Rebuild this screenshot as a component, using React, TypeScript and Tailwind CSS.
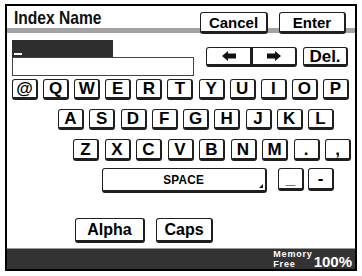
import React from "react";

function Key({
  children,
  className = "w-[26px] h-[21px] text-[17px]",
}: {
  children?: React.ReactNode;
  className?: string;
}) {
  return (
    <div
      className={`${className} flex shrink-0 items-center justify-center rounded-[3px] border border-[#1f1f1f] border-b-[3px] border-r-[2px] bg-white font-bold leading-none text-black`}
    >
      {children}
    </div>
  );
}

function Arrow({ dir }: { dir: "l" | "r" }) {
  return (
    <svg width="14" height="10" viewBox="0 0 14 10">
      {dir === "l" ? (
        <polygon points="0,5 6,0 6,2.5 14,2.5 14,7.5 6,7.5 6,10" fill="#111" />
      ) : (
        <polygon points="14,5 8,0 8,2.5 0,2.5 0,7.5 8,7.5 8,10" fill="#111" />
      )}
    </svg>
  );
}

export default function App() {
  const row1 = ["@", "Q", "W", "E", "R", "T", "Y", "U", "I", "O", "P"];
  const row2 = ["A", "S", "D", "F", "G", "H", "J", "K", "L"];
  const row3 = ["Z", "X", "C", "V", "B", "N", "M", ".", ","];
  return (
    <div className="w-[362px] h-[276px] bg-white pt-[4px] pl-[5px] font-['Liberation_Sans',Arial,sans-serif]">
      <div className="w-[352px] h-[267px] border-2 border-black flex flex-col overflow-hidden">
        {/* header */}
        <div className="h-[27px] shrink-0 flex bg-[linear-gradient(to_bottom,#ffffff_22px,#a3a3a3_22px)]">
          <div className="pl-[7px] pt-[2px] text-[19px] leading-[20px] font-bold text-[#111] whitespace-nowrap">
            <span className="inline-block origin-left scale-x-[0.82]">Index Name</span>
          </div>
          <div className="ml-auto mr-[9px] mt-[6px] flex gap-[11px] h-[22px]">
            <Key className="w-[68px] h-[22px] text-[15px]">Cancel</Key>
            <Key className="w-[67px] h-[22px] text-[15px]">Enter</Key>
          </div>
        </div>
        {/* input */}
        <div className="h-[45px] shrink-0 flex pl-[5px]">
          <div className="flex flex-col pt-[7px]">
            <div className="w-[101px] h-[17px] bg-[#2e2e2e] flex items-end pl-[2px] pb-[2px]">
              <div className="w-[8px] h-[2px] bg-white" />
            </div>
            <div className="w-[182px] h-[19px] border border-[#444] bg-white" />
          </div>
          <div className="ml-[12px] mt-[14px] flex h-[20px]">
            <Key className="w-[46px] h-[20px] text-[15px] rounded-r-none">
              <Arrow dir="l" />
            </Key>
            <Key className="w-[45px] h-[20px] text-[15px] rounded-l-none">
              <Arrow dir="r" />
            </Key>
            <Key className="ml-[6px] w-[45px] h-[20px] text-[17px]">Del.</Key>
          </div>
        </div>
        {/* keyboard */}
        <div className="flex flex-col">
          <div className="pt-[1px] pl-[5px] flex gap-[5.1px]">
            {row1.map((k) => (
              <Key key={k}>{k}</Key>
            ))}
          </div>
          <div className="pt-[9px] pl-[51px] flex gap-[5.25px]">
            {row2.map((k) => (
              <Key key={k}>{k}</Key>
            ))}
          </div>
          <div className="pt-[9px] pl-[66px] flex gap-[5.5px]">
            {row3.map((k) => (
              <Key key={k} className="w-[26px] h-[22px] text-[17px]">
                {k}
              </Key>
            ))}
          </div>
          <div className="pt-[7px] pl-[95px] flex items-start">
            <div className="relative">
              <Key className="w-[165px] h-[25px] text-[13px]">
                <span className="inline-block scale-x-[0.9] tracking-[0.3px]">SPACE</span>
              </Key>
              <svg
                className="absolute right-[4px] bottom-[5px]"
                width="4"
                height="4"
                viewBox="0 0 4 4"
              >
                <polygon points="4,0 4,4 0,4" fill="#111" />
              </svg>
            </div>
            <Key className="ml-[11px] w-[26px] h-[23px] text-[17px]">_</Key>
            <Key className="ml-[4px] w-[26px] h-[23px] text-[17px]">-</Key>
          </div>
          <div className="pt-[25px] pl-[68px] flex gap-[11px]">
            <Key className="w-[70px] h-[25px] text-[16px]">Alpha</Key>
            <Key className="w-[57px] h-[25px] text-[16px]">Caps</Key>
          </div>
        </div>
        {/* status bar */}
        <div className="mt-auto h-[21px] shrink-0 bg-[#333333] border-t border-[#9a9a9a] flex items-center justify-end pr-[3px] text-white">
          <div className="flex flex-col text-[9px] leading-[10px] font-bold tracking-[0.8px] mr-[1px]">
            <span>Memory</span>
            <span>Free</span>
          </div>
          <span className="text-[15px] font-bold leading-none mt-[4px]">100%</span>
        </div>
      </div>
    </div>
  );
}
